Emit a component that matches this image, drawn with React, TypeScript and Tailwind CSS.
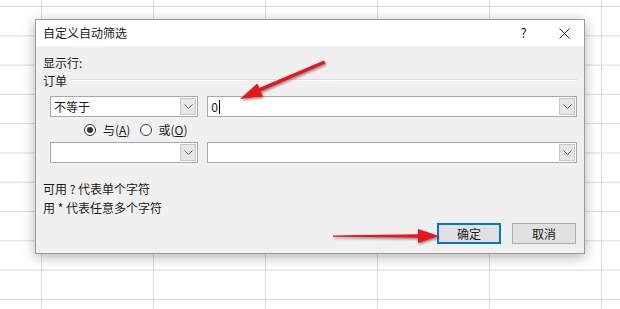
import React from 'react'

const font = "font-['Microsoft_YaHei','Noto_Sans_CJK_SC',sans-serif]"

function Chevron() {
  return (
    <svg width="9" height="5" viewBox="0 0 9 5" className="block">
      <path d="M0.5 0.5 L4.5 4.5 L8.5 0.5" fill="none" stroke="#606060" strokeWidth="1" />
    </svg>
  )
}

function Combo({ width, text, caret }: { width: string; text?: string; caret?: boolean }) {
  return (
    <div className={`${width} h-[21px] flex border border-[#a8a8a8] bg-white`}>
      <div className="flex-1 flex items-center pl-[3px] text-[12px] text-[#1a1a1a]">
        {text}
        {caret && <span className="ml-[1px] w-px h-[14px] bg-black" />}
      </div>
      <div className="w-[16px] m-[1px] flex items-center justify-center bg-[#e6e6e6] border border-[#c8c8c8]">
        <Chevron />
      </div>
    </div>
  )
}

function Radio({ checked }: { checked?: boolean }) {
  return (
    <span className="w-[12px] h-[12px] rounded-full border border-[#333] bg-white flex items-center justify-center">
      {checked && <span className="w-[6px] h-[6px] rounded-full bg-[#333]" />}
    </span>
  )
}

export default function App() {
  return (
    <div className={`relative w-[620px] h-[309px] overflow-hidden bg-white ${font} bg-[linear-gradient(to_right,#dadada_1px,transparent_1px),linear-gradient(to_bottom,#dadada_1px,transparent_1px)] bg-[size:112px_29.3px] bg-[position:41px_6px]`}>
      {/* dialog window */}
      <div className="absolute left-[35px] top-[19px] w-[550px] h-[235px] flex flex-col border border-[#9a9a9a] bg-[#f0f0f0] shadow-[0_3px_12px_rgba(0,0,0,0.3)]">
        <div className="h-[26px] flex items-center bg-white text-[12px] text-[#1a1a1a]">
          <span className="flex-1 pl-[7px]">自定义自动筛选</span>
          <span className="w-[40px] pl-[3px] text-center text-[13px]">?</span>
          <span className="w-[42px] pl-[3px] flex justify-center">
            <svg width="11" height="11" viewBox="0 0 11 11">
              <path d="M0.5 0.5 L10.5 10.5 M10.5 0.5 L0.5 10.5" stroke="#333" strokeWidth="1" />
            </svg>
          </span>
        </div>

        <div className="flex-1 flex flex-col px-[7px] text-[12px] leading-[16px] text-[#1a1a1a]">
          <div className="mt-[9px]">显示行:</div>
          <div className="mt-[2px] flex items-center gap-[4px]">
            <span>订单</span>
            <span className="flex-1 h-[2px] border-t border-[#dcdcdc] border-b border-b-white -mt-[3px]" />
          </div>

          <div className="mt-[7px] pl-[7px] flex gap-[9px]">
            <Combo width="w-[149px]" text="不等于" />
            <Combo width="w-[372px]" text="0" caret />
          </div>

          <div className="mt-[5px] h-[16px] pl-[41px] flex items-center">
            <Radio checked />
            <span className="ml-[7px]">与(<span className="underline">A</span>)</span>
            <span className="ml-[10px]"><Radio /></span>
            <span className="ml-[6px]">或(<span className="underline">O</span>)</span>
          </div>

          <div className="mt-[4px] pl-[7px] flex gap-[9px]">
            <Combo width="w-[149px]" />
            <Combo width="w-[372px]" />
          </div>

          <div className="mt-[18px]">可用 ? 代表单个字符</div>
          <div className="mt-[3px]">用 * 代表任意多个字符</div>

          <div className="mt-[7px] flex justify-end gap-[11px] pr-[1px]">
            <button className="w-[64px] h-[21px] border-2 border-[#0078d7] bg-[#e1e1e1] text-[12px]">确定</button>
            <button className="w-[64px] h-[21px] border border-[#adadad] bg-[#e1e1e1] text-[12px]">取消</button>
          </div>
        </div>
      </div>

      {/* red annotation arrows */}
      <svg className="absolute inset-0 pointer-events-none" width="620" height="309" viewBox="0 0 620 309">
        <defs>
          <filter id="sh" x="-20%" y="-20%" width="140%" height="140%">
            <feDropShadow dx="1" dy="1.5" stdDeviation="1" floodColor="#000" floodOpacity="0.45" />
          </filter>
        </defs>
        <g filter="url(#sh)" fill="#e8141a">
          <polygon points="324,60.5 325.5,63.5 259,92 258,88.5" />
          <polygon points="240,99 257.2,83.6 263,96.4" />
          <polygon points="333,235.5 420,234.3 420,237.7 333,236.8" />
          <polygon points="439,236 418,229 418,243" />
        </g>
      </svg>
    </div>
  )
}
